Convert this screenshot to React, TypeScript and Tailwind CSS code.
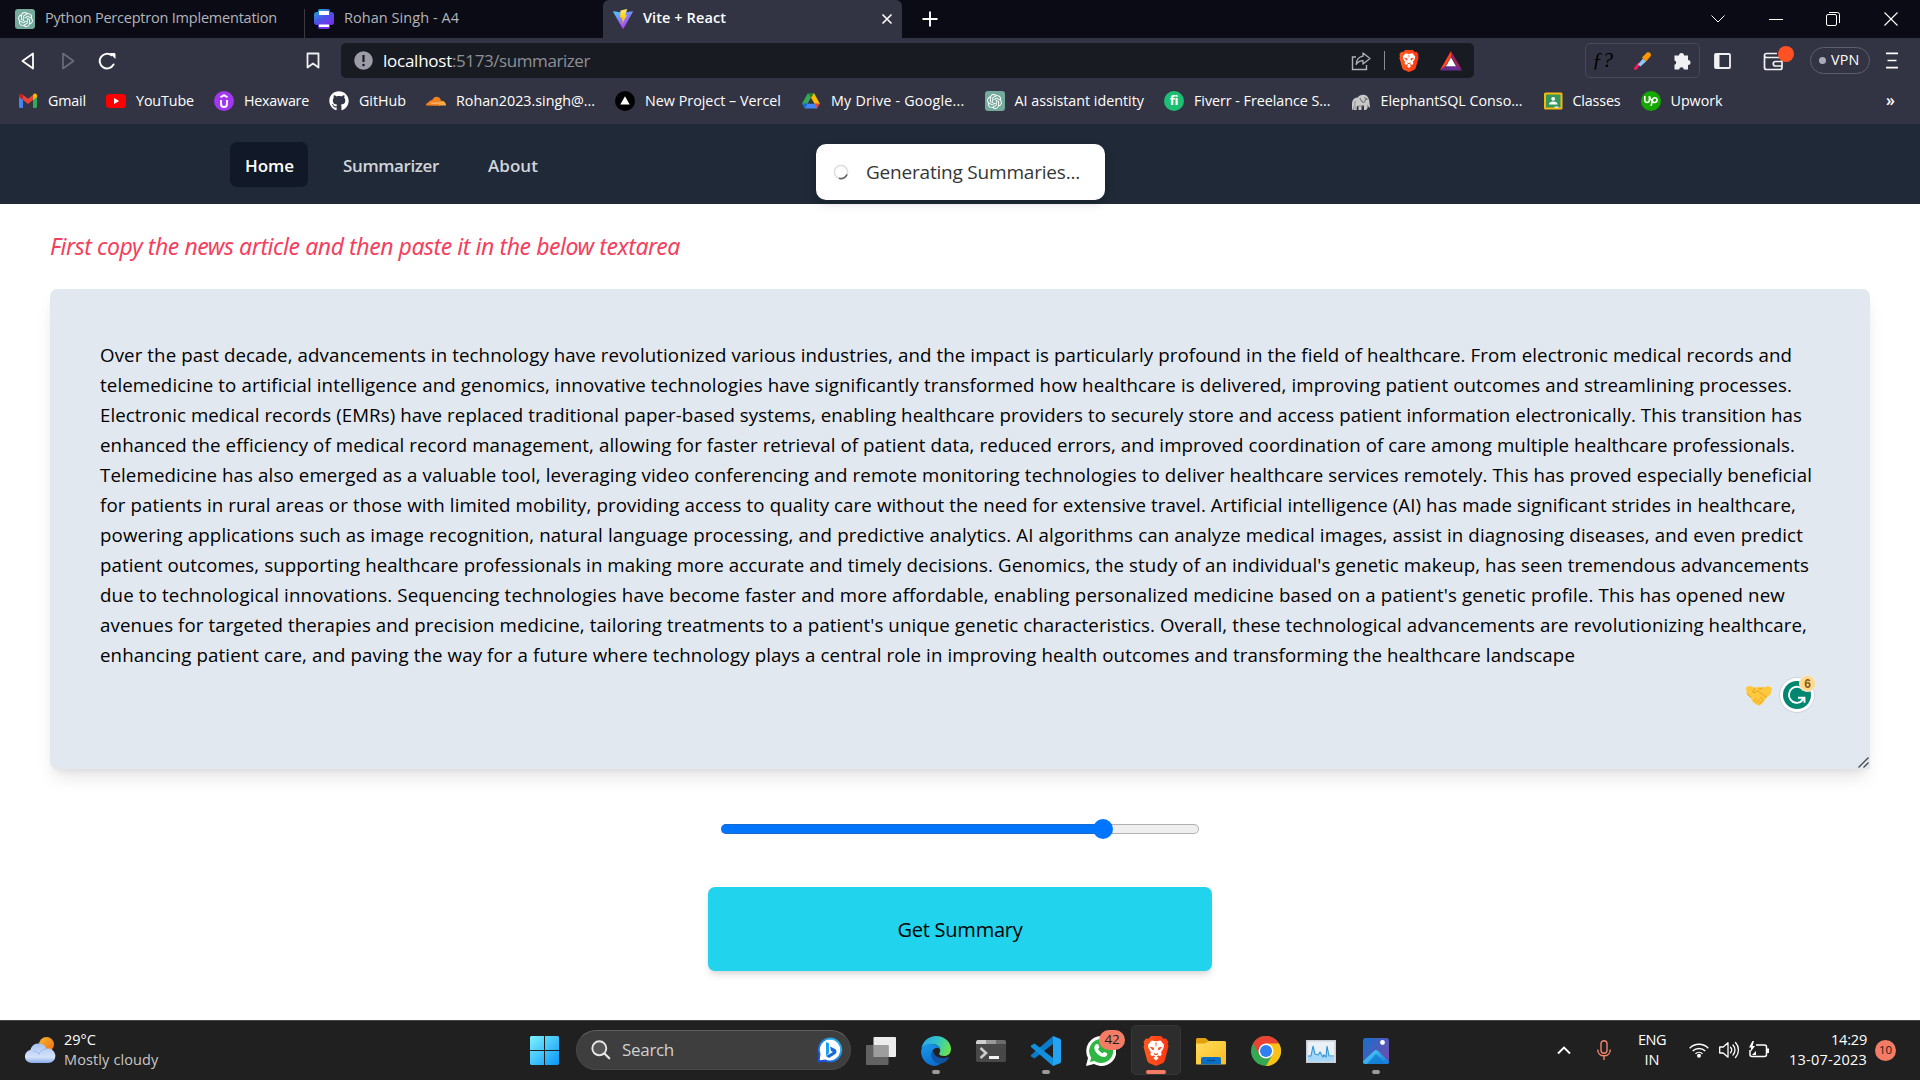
import { useLayoutEffect, useRef, type ReactNode } from "react";
import { SiOpenai, SiUpwork } from "react-icons/si";
import { FaGithub } from "react-icons/fa";

/* Text that is tracked so that it spans exactly `w` pixels. */
function Fit({ w, children, className = "" }: { w: number; children: string; className?: string }) {
  const ref = useRef<HTMLSpanElement>(null);
  useLayoutEffect(() => {
    const el = ref.current;
    if (!el) return;
    el.style.letterSpacing = "0px";
    const natural = el.getBoundingClientRect().width;
    el.style.letterSpacing = `${(w - natural) / children.length}px`;
  }, [w, children]);
  return (
    <span ref={ref} className={`inline-block whitespace-pre ${className}`}>
      {children}
    </span>
  );
}

function GptIcon() {
  return (
    <span className="flex h-5 w-5 items-center justify-center rounded-[3px] bg-[#74aa9c] text-white">
      <SiOpenai size={15} />
    </span>
  );
}

function ViteIcon() {
  return (
    <svg width="20" height="20" viewBox="0 0 20 20">
      <defs>
        <linearGradient id="v1" x1="0" y1="0" x2="0.6" y2="1">
          <stop offset="0" stopColor="#41d1ff" />
          <stop offset="1" stopColor="#bd34fe" />
        </linearGradient>
        <linearGradient id="v2" x1="0" y1="0" x2="0" y2="1">
          <stop offset="0" stopColor="#ffea83" />
          <stop offset="0.3" stopColor="#ffdd35" />
          <stop offset="1" stopColor="#ffa800" />
        </linearGradient>
      </defs>
      <path d="M19.8 3 10.5 19.5a.5.5 0 0 1-.9 0L.2 3c-.2-.4.1-.8.6-.8l9.2 1.6 9.200-1.600c.5 0 .8.400.6.800Z" fill="url(#v1)" />
      <path d="m14.300.100-6.800 1.300-.5 7.300 2.100-.4-.6 3 1.300-.300-.9 4.300 5.200-9.300-2 .3Z" fill="url(#v2)" />
    </svg>
  );
}

function PrintIcon() {
  return (
    <svg width="20" height="20" viewBox="0 0 20 20">
      <defs>
        <linearGradient id="pr" x1="0" y1="0" x2="0.6" y2="1">
          <stop offset="0" stopColor="#16b8cd" />
          <stop offset="0.5" stopColor="#4a55e8" />
          <stop offset="1" stopColor="#7d2ae8" />
        </linearGradient>
      </defs>
      <path d="M6 0h8a2 2 0 0 1 2 2v1h1a3 3 0 0 1 3 3v7a3 3 0 0 1-3 3h-1v2a2 2 0 0 1-2 2H6a2 2 0 0 1-2-2v-2H3a3 3 0 0 1-3-3V6a3 3 0 0 1 3-3h1V2a2 2 0 0 1 2-2Z" fill="url(#pr)" />
      <path d="M5 2h10v4H5ZM5 15.500h10v2.500H5Z" fill="#fff" />
    </svg>
  );
}

function BraveIcon({ w, h }: { w: number; h: number }) {
  return (
    <svg width={w} height={h} viewBox="0 0 26 30" preserveAspectRatio="none">
      <defs>
        <linearGradient id="bv" x1="0" y1="0" x2="1" y2="0">
          <stop offset="0" stopColor="#ff5a1f" />
          <stop offset="1" stopColor="#ff3512" />
        </linearGradient>
      </defs>
      <path d="M8 0h10l2.500 2.800 2.500-.3 2.500 3.500-.8 2 .8 2.500-3.500 13.500c-.4 1.500-1.200 2.500-2.500 3.300L13 30l-6.500-2.700C5.200 26.500 4.400 25.500 4 24L.5 10.500l.8-2L.5 6 3 2.500l2.500.3Z" fill="url(#bv)" />
      <path d="m8.500 4.500 4.500.8 4.500-.8 3.500 4.300-.4 3.200-2.600 4.500.8 1.800-1.600 2-2-.8-1.400.8 1.900 2-2.700 2.200-2.700-2.200 1.900-2-1.400-.8-2 .8-1.600-2 .8-1.800L5.400 12 5 8.800Z" fill="#fff" />
      <path d="m6.500 10.700 4.200.7.300 1.800-.8 1.300Zm13 0-4.200.7-.3 1.800.8 1.300ZM10.700 16.700 13 18l2.300-1.300-.9 2.300H11.600ZM12.400 6.500h1.200l-.3 4h-.6Z" fill="#ff4a17" />
    </svg>
  );
}

function GmailIcon() {
  return (
    <svg width="20" height="20" viewBox="0 0 20 20">
      <path d="M1 4.500v11A1.500 1.500 0 0 0 2.500 17H5V8Z" fill="#4285f4" />
      <path d="M15 8v9h2.500a1.500 1.500 0 0 0 1.500-1.500v-11Z" fill="#34a853" />
      <path d="M15 4.200v4.900l4-3V4.800c0-1.900-2-2.800-3.400-1.700Z" fill="#fbbc04" />
      <path d="M5 9.100V4l5 3.800L15 4v5.100l-5 3.800Z" fill="#ea4335" />
      <path d="M1 4.800v1.300l4 3V4l-.6-.8C3 2 1 3 1 4.800Z" fill="#c5221f" />
    </svg>
  );
}

function YouTubeIcon() {
  return (
    <svg width="20" height="20" viewBox="0 0 20 20">
      <rect y="3" width="20" height="14" rx="3.500" fill="#f00" />
      <path d="m8 7 5.200 3L8 13Z" fill="#fff" />
    </svg>
  );
}

function HexIcon() {
  return (
    <svg width="20" height="20" viewBox="0 0 20 20">
      <circle cx="10" cy="10" r="10" fill="#a435f0" />
      <path d="M7 9v4a3 3 0 0 0 6 0V9M6.500 6.300 10 4.200l3.500 2.100" fill="none" stroke="#fff" strokeWidth="1.900" />
    </svg>
  );
}

function CloudflareIcon() {
  return (
    <svg width="20" height="20" viewBox="0 0 20 20">
      <path d="M0 14.500c0-2 1.300-3.200 3-3.300.2-1.500 1.800-2.300 3-1.600C7 6.800 9 5.500 11 5.700c2.200.2 3.700 1.700 4 4l-1 5Z" fill="#f6821f" />
      <path d="M13 14.500c.4-2.500 1.300-4.700 3-4.700 2.300.2 4 2.200 4 4.700Z" fill="#fbad41" />
      <path d="m5 12.300 9-.3" stroke="#ffe1b8" strokeWidth=".7" />
    </svg>
  );
}

function VercelIcon() {
  return (
    <svg width="20" height="20" viewBox="0 0 20 20">
      <circle cx="10" cy="10" r="10" fill="#000" />
      <path d="m10 5.300 4.700 8.200H5.300Z" fill="#fff" />
    </svg>
  );
}

function DriveIcon() {
  return (
    <svg width="20" height="20" viewBox="0 0 20 20">
      <path d="M7 2 1 12.500 4 17.500 10 7Z" fill="#34a853" />
      <path d="M13 2H9.500L7.800 3.500 13.500 13H19Z" fill="#fbbc04" />
      <path d="M7 2 10 7l3-5Z" fill="#188038" />
      <path d="M6.500 12.500H1l3 5 3-1Z" fill="#1967d2" />
      <path d="M13.500 12.500H19l-3 5-3-1Z" fill="#ea4335" />
      <path d="M6.700 12.500h6.900L16 17.500H4Z" fill="#4285f4" />
      <path d="M10 7 6.800 12.500h6.500Z" fill="#333443" />
    </svg>
  );
}

function FiverrIcon() {
  return (
    <span className="flex h-5 w-5 items-center justify-center rounded-full bg-[#1dbf73] pb-[2px] text-[13px] leading-none font-bold tracking-tight text-white">
      fi
    </span>
  );
}

function ElephantIcon() {
  return (
    <svg width="20" height="20" viewBox="0 0 20 20">
      <path d="M1 19v-6c0-4 2-6.500 6-6.500.5-1.500 2-2.500 4-2.500 3-.5 5 .5 6 2.500 1.200 1.800 1.500 4 1.600 6.500.2 1.500.6 3 .4 3.500-1.200.3-2-1-2.400-3.500V17l-1.600 2h-2v-4l-1-1-1.500 1v4h-3v-4H6l-.5 4h-3L2.300 15 2 18.500Z" fill="#c9c9c9" />
      <path d="M9 7c1 3 3 5 4.500 4 1-1.500.8-4 .3-5" fill="none" stroke="#777" strokeWidth="1.100" />
      <path d="M4 10v8M7 15h5" stroke="#8a8a8a" strokeWidth="1" />
      <circle cx="15.800" cy="8" r=".8" fill="#444" />
    </svg>
  );
}

function ClassesIcon() {
  return (
    <svg width="20" height="20" viewBox="0 0 20 20">
      <rect x="1" y="1.500" width="18.500" height="17" rx="1.500" fill="#f6b90b" />
      <rect x="3" y="3.500" width="14.500" height="13" fill="#35955a" />
      <circle cx="10.200" cy="7.800" r="1.900" fill="#fff" />
      <path d="M6 13.500c0-2.300 2-3 4.200-3s4.300.7 4.300 3Z" fill="#fff" />
      <path d="M11.500 15.500h4v1.500h-4Z" fill="#e6e6e6" />
    </svg>
  );
}

function UpworkIcon() {
  return (
    <span className="flex h-5 w-5 items-center justify-center rounded-full bg-[#14a800] text-white">
      <SiUpwork size={14} />
    </span>
  );
}

const bookmarks: { icon: ReactNode; label: string; w: number }[] = [
  { icon: <GmailIcon />, label: "Gmail", w: 38 },
  { icon: <YouTubeIcon />, label: "YouTube", w: 58 },
  { icon: <HexIcon />, label: "Hexaware", w: 65 },
  { icon: <FaGithub size={20} color="#fff" />, label: "GitHub", w: 47 },
  { icon: <CloudflareIcon />, label: "Rohan2023.singh@...", w: 139 },
  { icon: <VercelIcon />, label: "New Project – Vercel", w: 136 },
  { icon: <DriveIcon />, label: "My Drive - Google...", w: 133.500 },
  { icon: <GptIcon />, label: "AI assistant identity", w: 129.500 },
  { icon: <FiverrIcon />, label: "Fiverr - Freelance S...", w: 136.500 },
  { icon: <ElephantIcon />, label: "ElephantSQL Conso...", w: 142 },
  { icon: <ClassesIcon />, label: "Classes", w: 48 },
  { icon: <UpworkIcon />, label: "Upwork", w: 52 },
];

const article: [string, number][] = [
  ["Over the past decade, advancements in technology have revolutionized various industries, and the impact is particularly profound in the field of healthcare. From electronic medical records and", 1692],
  ["telemedicine to artificial intelligence and genomics, innovative technologies have significantly transformed how healthcare is delivered, improving patient outcomes and streamlining processes.", 1692],
  ["Electronic medical records (EMRs) have replaced traditional paper-based systems, enabling healthcare providers to securely store and access patient information electronically. This transition has", 1702],
  ["enhanced the efficiency of medical record management, allowing for faster retrieval of patient data, reduced errors, and improved coordination of care among multiple healthcare professionals.", 1695],
  ["Telemedicine has also emerged as a valuable tool, leveraging video conferencing and remote monitoring technologies to deliver healthcare services remotely. This has proved especially beneficial", 1712],
  ["for patients in rural areas or those with limited mobility, providing access to quality care without the need for extensive travel. Artificial intelligence (AI) has made significant strides in healthcare,", 1696],
  ["powering applications such as image recognition, natural language processing, and predictive analytics. AI algorithms can analyze medical images, assist in diagnosing diseases, and even predict", 1703],
  ["patient outcomes, supporting healthcare professionals in making more accurate and timely decisions. Genomics, the study of an individual's genetic makeup, has seen tremendous advancements", 1709],
  ["due to technological innovations. Sequencing technologies have become faster and more affordable, enabling personalized medicine based on a patient's genetic profile. This has opened new", 1685],
  ["avenues for targeted therapies and precision medicine, tailoring treatments to a patient's unique genetic characteristics. Overall, these technological advancements are revolutionizing healthcare,", 1707],
  ["enhancing patient care, and paving the way for a future where technology plays a central role in improving health outcomes and transforming the healthcare landscape", 1475],
];

function TabStrip() {
  return (
    <div className="flex h-[38px] bg-[#0b0b15] text-[14.500px] text-[#b3b4b9]">
      <div className="flex w-[304px] items-center gap-[10px] pl-[15px]">
        <GptIcon />
        <Fit w={232} className="pb-[2px]">Python Perceptron Implementation</Fit>
      </div>
      <div className="mt-[9px] w-px bg-[#3a3a40]" />
      <div className="flex w-[298px] items-center gap-[10px] pl-[9px]">
        <PrintIcon />
        <Fit w={115} className="pb-[2px]">Rohan Singh - A4</Fit>
      </div>
      <div className="flex w-[299px] items-center gap-[10px] rounded-t-[6px] bg-[#333443] pl-[10px] text-white">
        <ViteIcon />
        <Fit w={83} className="pb-[2px] font-semibold">Vite + React</Fit>
        <svg className="ml-auto mr-[9px]" width="12" height="12" viewBox="0 0 12 12">
          <path d="m1.500 1.500 9 9m0-9-9 9" stroke="#fff" strokeWidth="1.600" />
        </svg>
      </div>
      <div className="flex flex-1 items-center pl-[20px]">
        <svg width="16" height="16" viewBox="0 0 16 16">
          <path d="M8 0.500v15M.5 8h15" stroke="#fff" strokeWidth="1.900" />
        </svg>
        <div className="mr-[22px] ml-auto flex items-center">
          <svg width="14" height="8" viewBox="0 0 14 8" className="mr-[44px]">
            <path d="m.5.500 6.500 6.500L13.500.500" fill="none" stroke="#fff" strokeWidth="1" />
          </svg>
          <div className="mr-[43px] h-px w-[14px] bg-white" />
          <svg width="14" height="14" viewBox="0 0 14 14" className="mr-[44px]">
            <rect x=".5" y="2.500" width="10" height="11" rx="1.500" fill="none" stroke="#fff" />
            <path d="M3 .5h8.500a2 2 0 0 1 2 2V11" fill="none" stroke="#fff" />
          </svg>
          <svg width="14" height="14" viewBox="0 0 14 14">
            <path d="m.5.500 13 13m0-13-13 13" stroke="#fff" strokeWidth="1.100" />
          </svg>
        </div>
      </div>
    </div>
  );
}

function Toolbar() {
  return (
    <div className="flex h-[45px] items-center">
      <svg width="14" height="18" viewBox="0 0 14 18" className="ml-[21px]">
        <path d="M12 1.500v15L1.500 9Z" fill="none" stroke="#fff" strokeWidth="1.800" strokeLinejoin="round" />
      </svg>
      <svg width="14" height="18" viewBox="0 0 14 18" className="ml-[26px]">
        <path d="M2 1.500v15L12.500 9Z" fill="none" stroke="#6b6c79" strokeWidth="1.700" strokeLinejoin="round" />
      </svg>
      <svg width="19" height="18" viewBox="0 0 19 18" className="ml-[23px]">
        <path d="M15.500 12.500A7.300 7.300 0 1 1 13.500 3.300" fill="none" stroke="#fff" strokeWidth="2" strokeLinecap="round" />
        <path d="M11.500 1h4.300c1.300 0 1.700.7 1.700 1.700V7Z" fill="#fff" />
      </svg>
      <svg width="14" height="17" viewBox="0 0 14 17" className="ml-[189px]">
        <path d="M1.500 1.500h11v14L7 11.500l-5.500 4Z" fill="none" stroke="#f0f0f0" strokeWidth="1.800" strokeLinejoin="round" />
      </svg>
      <div className="ml-[21px] flex h-[35px] w-[1133px] items-center rounded-[5px] bg-[#181b22]">
        <svg width="19" height="19" viewBox="0 0 19 19" className="ml-[13px]">
          <circle cx="9.500" cy="9.500" r="9.300" fill="#9b9ca6" />
          <path d="M9.500 4v7" stroke="#181b22" strokeWidth="2.200" />
          <circle cx="9.500" cy="14" r="1.300" fill="#181b22" />
        </svg>
        <span className="ml-[10px] text-[17px] text-white">
          <Fit w={69}>localhost</Fit>
          <Fit w={138} className="text-[#8e9097]">:5173/summarizer</Fit>
        </span>
        <svg width="20" height="20" viewBox="0 0 20 20" className="ml-auto">
          <path d="M5 6H1.500v12.500h14V14" fill="none" stroke="#b0b1b6" strokeWidth="1.400" />
          <path d="m12 2 7 5.500-7 5.500v-3.300c-3 0-5 1-6.800 3.800.3-4.700 2.800-7.800 6.800-8.300Z" fill="none" stroke="#b0b1b6" strokeWidth="1.300" strokeLinejoin="round" />
        </svg>
        <div className="ml-[13px] h-[19px] w-px bg-[#8a8b90]" />
        <div className="ml-[14px]"><BraveIcon w={20} h={22} /></div>
        <svg width="22" height="20" viewBox="0 0 22 20" className="mr-[12px] ml-[21px]">
          <path d="M11 0v6L5.500 15.500 0 19Z" fill="#ff4724" />
          <path d="M11 0v6l5.500 9.500L22 19Z" fill="#9e1f63" />
          <path d="M0 19.500 5.500 15h11l5.500 4.500Z" fill="#662d91" />
          <path d="m11 6.500 5 8.700H6Z" fill="#fff" />
        </svg>
      </div>
      <div className="ml-[111px] flex h-[35px] w-[115px] items-center rounded-[5px] border border-[#494a59]">
        <span className="ml-[6px] w-[22px] font-['Liberation_Serif'] text-[21px] leading-none text-black italic">ƒ?</span>
        <svg width="18" height="18" viewBox="0 0 18 18" className="ml-[20px]">
          <path d="M1.500 16.500 5 12" stroke="#e91e63" strokeWidth="3" strokeLinecap="round" />
          <path d="m4 12.500 5-6 3 3-5.500 5Z" fill="#90caf9" />
          <path d="m8 5.500 5-5c2.500-1 4.500 1 3.800 3.500L12 9.500Z" fill="#ff9800" />
        </svg>
        <svg width="18" height="18" viewBox="0 0 18 18" className="ml-[21px]">
          <path d="M6 3.500a2.500 2.500 0 0 1 5 0h4V8a2.500 2.500 0 0 1 0 5v4.500h-4.200a2.300 2.300 0 0 0-4.600 0H1.500v-4.800a2.200 2.200 0 0 0 0-4.300V3.500Z" fill="#f1f1f3" />
        </svg>
      </div>
      <svg width="17" height="16" viewBox="0 0 17 16" className="ml-[14px]">
        <rect x="1" y="1" width="15" height="14" rx="1" fill="none" stroke="#f1f1f3" strokeWidth="1.800" />
        <path d="M1 1h4.500v14H1Z" fill="#f1f1f3" />
      </svg>
      <div className="relative ml-[32px] h-[20px] w-[20px]">
        <svg width="20" height="20" viewBox="0 0 20 20">
          <path d="M14 2.500H3.500a2 2 0 0 0 0 4H19M1.500 4.500v12a2 2 0 0 0 2 2h13.500a2 2 0 0 0 2-2v-10M19 10.500h-6.500a2 2 0 0 0 0 4.500H19" fill="none" stroke="#f1f1f3" strokeWidth="1.700" />
        </svg>
        <div className="absolute -top-[5px] left-[15px] h-[16px] w-[16px] rounded-full bg-[#ff5124]" />
      </div>
      <div className="ml-[27px] flex h-[27px] w-[60px] items-center rounded-full border border-[#5c5e70] pl-[8px] text-[14.300px] text-white">
        <span className="mr-[5px] h-[7px] w-[7px] rounded-full bg-[#a9abbd]" />
        <Fit w={28.500} className="pb-[2px]">VPN</Fit>
      </div>
      <svg width="12" height="17" viewBox="0 0 12 17" className="ml-[16px]">
        <path d="M0 1.300h12M1.500 8.500h9M0 15.700h12" stroke="#fff" strokeWidth="1.700" />
      </svg>
    </div>
  );
}

function Grammarly() {
  return (
    <div className="relative h-[36px] w-[36px]">
      <svg width="36" height="36" viewBox="0 0 36 36">
        <circle cx="18" cy="18" r="17.500" fill="#fff" stroke="#cdd0df" strokeWidth="1" />
        <circle cx="18" cy="18" r="14" fill="#02866f" />
        <path d="M24.500 13.200A8 8 0 1 0 22.800 24.200M19 20.700h6.500v5M25 21l-3.500 4" fill="none" stroke="#fff" strokeWidth="1.900" />
      </svg>
      <span className="absolute -top-[2px] left-[20px] flex h-[17px] w-[17px] items-center justify-center rounded-full border border-[#f5ecdc] bg-[#ffd98f] font-['Liberation_Sans'] text-[12px] font-bold text-[#8a5a12]">
        6
      </span>
    </div>
  );
}

function Handshake() {
  return (
    <svg width="26" height="21" viewBox="0 0 26 21">
      <path d="M1 1.500 5 1l4 1.800 4-1 4 1L22 1l4 2-1.500 6.500L20 13l-3 5-4 2.700-6-3.200-2-4.500L1 9 0 3Z" fill="#ffc83d" />
      <path d="m9 3-2.500 4c1.500 1.500 3.500 0 5-1.300l7 5 1.500 2M8 16l2-2.500M10.500 18l2.500-3M13.500 19l2-2.500M17.500 15l-3-2.500M1 9l4 3.500M13 4l4-1.200" fill="none" stroke="#e59a20" strokeWidth=".9" strokeLinecap="round" />
    </svg>
  );
}

function Page() {
  return (
    <main className="flex h-[896px] flex-col bg-white text-black">
      <nav className="flex h-[80px] shrink-0 items-center bg-[#1f2937] pt-px pl-[230px] text-[17px] font-semibold text-[#d1d5db]">
        <div className="flex h-[45px] w-[78px] items-center rounded-[7px] bg-[#111827] pt-[2px] pl-[15px] text-white">
          <Fit w={49}>Home</Fit>
        </div>
        <Fit w={96} className="ml-[35px] pt-[2px]">Summarizer</Fit>
        <Fit w={50} className="ml-[49px] pt-[2px]">About</Fit>
        <div className="relative z-10 mt-[14px] ml-[278px] flex h-[56px] w-[289px] items-center rounded-[10px] bg-white text-[19px] font-normal text-[#363636] shadow-[0_4px_12px_rgba(0,0,0,0.1),0_4px_4px_rgba(0,0,0,0.05)]">
          <svg width="16" height="16" viewBox="0 0 16 16" className="ml-[17px]">
            <circle cx="8" cy="8" r="6.600" fill="none" stroke="#e0e0e0" strokeWidth="1.700" />
            <path d="M14 10.500A6.600 6.600 0 0 1 6 14.300" fill="none" stroke="#616161" strokeWidth="1.700" />
          </svg>
          <Fit w={214} className="ml-[17px] pt-[2px]">Generating Summaries...</Fit>
        </div>
      </nav>
      <p className="mt-[24px] ml-[50px] h-[36px] font-['Noto_Sans'] text-[23px] leading-[36px] text-[#f43f5e] italic">
        <Fit w={630}>First copy the news article and then paste it in the below textarea</Fit>
      </p>
      <section className="mx-[50px] mt-[25px] flex h-[480px] shrink-0 flex-col rounded-[7px] rounded-br-none bg-[#e2e8f0] pt-[51px] pl-[50px] shadow-[0_12px_18px_-4px_rgba(0,0,0,0.1),0_5px_8px_-5px_rgba(0,0,0,0.1)]">
        {article.map(([line, w]) => (
          <div key={line} className="h-[30px] text-[18.700px] leading-[30px]">
            <Fit w={w}>{line}</Fit>
          </div>
        ))}
        <div className="mt-[7px] mr-[55px] flex items-center justify-end gap-[7px]">
          <Handshake />
          <Grammarly />
        </div>
        <svg width="11" height="11" viewBox="0 0 11 11" className="mt-auto mr-px mb-px self-end">
          <path d="m.5 10.500 10-10M5.500 10.500l5-5" stroke="#444" strokeWidth="1.300" />
        </svg>
      </section>
      <div className="mx-auto mt-[50px] flex h-[20px] w-[478px] items-center">
        <div className="h-[10px] w-[374px] rounded-l-full border-y border-[#1c68cc] bg-[#0075ff]" />
        <div className="-ml-[1px] -mr-[10px] h-[20px] w-[20px] -translate-x-[1px] rounded-full bg-[#0075ff]" />
        <div className="h-[10px] flex-1 rounded-r-full border border-l-0 border-[#b2b2b2] bg-[#efefef]" />
      </div>
      <button className="mx-auto mt-[48px] flex h-[84px] w-[504px] shrink-0 items-center justify-center rounded-[7px] bg-[#22d3ee] pt-[2px] text-[20px] shadow-[0_5px_7px_-1px_rgba(0,0,0,0.12),0_2px_4px_-2px_rgba(0,0,0,0.1)]">
        <Fit w={125}>Get Summary</Fit>
      </button>
    </main>
  );
}

function WindowsLogo() {
  return (
    <svg width="29" height="29" viewBox="0 0 29 29">
      <defs>
        <linearGradient id="wn" x1="0" y1="0" x2="29" y2="29" gradientUnits="userSpaceOnUse">
          <stop offset="0" stopColor="#7df3ff" />
          <stop offset="1" stopColor="#0a95f8" />
        </linearGradient>
      </defs>
      <path d="M1 0h13v14H0V1ZM15 0h13l1 1v13H15ZM0 15h14v14H1l-1-1ZM15 15h14v13l-1 1H15Z" fill="url(#wn)" />
    </svg>
  );
}

function EdgeIcon() {
  return (
    <svg width="30" height="30" viewBox="0 0 30 30">
      <defs>
        <linearGradient id="e1" x1="0" y1="0.300" x2="1" y2="0.600">
          <stop offset="0" stopColor="#2aa5e8" />
          <stop offset="0.500" stopColor="#33c6c4" />
          <stop offset="1" stopColor="#6ee34c" />
        </linearGradient>
        <linearGradient id="e2" x1="0" y1="0" x2="0.500" y2="1">
          <stop offset="0" stopColor="#1c9be8" />
          <stop offset="1" stopColor="#0a6fd0" />
        </linearGradient>
      </defs>
      <path d="M.5 12.500C1.500 5 8 0 15 0c9 0 15 6.500 15 13 0 4.500-3.200 7-6.800 7-3 0-5-1-5-2.300 0-1 1-1.200 1-3.700 0-3-3-6-7.700-6C6 8 2 10.500.5 12.500Z" fill="url(#e1)" />
      <path d="M.1 15C.5 10 5.500 7.500 10.500 7.700c5 .2 8.700 3.200 8.700 6.300-1-2-3.500-3-5.500-1.500-3 2-3.500 6-1.500 9.500 2.300 4.300 6 5 8.500 4.700-2 2-5 3.200-8 3.200C5.500 29 0 23 .1 15Z" fill="url(#e2)" />
      <path d="M12 14c-3 3.500-1.800 8 1 11 2 2 4 2.700 6.500 2.500 4-.5 7-3 8.400-6 .2-.5-.3-.8-.8-.5-5 2.500-12 1-14.300-4-.5-1.200-.7-2-.8-3Z" fill="#1254a4" />
    </svg>
  );
}

function BingIcon() {
  return (
    <svg width="26" height="26" viewBox="0 0 26 26">
      <defs>
        <linearGradient id="bg" x1="1" y1="0" x2="0" y2="1">
          <stop offset="0" stopColor="#24c0ee" />
          <stop offset="1" stopColor="#1b48d8" />
        </linearGradient>
      </defs>
      <path d="M13 1.500A11.500 11.500 0 1 1 8 23.500L1.500 24.500 2.500 17A11.500 11.500 0 0 1 13 1.500Z" fill="#fff" stroke="url(#bg)" strokeWidth="2" />
      <path d="m9 5 3 1.200v10l-3 2.800Z" fill="#1d9ff0" />
      <path d="m13 9.500 5 2.500c2.200 1.500 1.700 4 0 5.300L12 21l-3-2 7-4-2-1Z" fill="#1668df" />
    </svg>
  );
}

function VSCodeIcon() {
  return (
    <svg width="30" height="30" viewBox="0 0 30 30">
      <path d="M22 0v8L3.500 22.500 0 20.500v-1.500Z" fill="#0a7bc8" />
      <path d="M22 30v-8L3.500 7.500 0 9.500V11Z" fill="#1290de" />
      <path d="m22 0 7 2.800q1 .5 1 1.500v21.400q0 1-1 1.500L22 30Z" fill="#24a3f0" />
    </svg>
  );
}

function WhatsAppIcon() {
  return (
    <div className="relative h-[30px] w-[30px]">
      <svg width="30" height="30" viewBox="0 0 30 30">
        <path d="M15 0A15 15 0 1 1 8 28L0 30l2-8A15 15 0 0 1 15 0Z" fill="#fff" />
        <path d="M15 3a12 12 0 1 1-6.500 22L4 26l1.200-4.300A12 12 0 0 1 15 3Z" fill="#2db742" />
        <path d="M10.500 8c1-.3 1.700 0 2 1l.8 2c.2.700-1 1.500-1.200 2 1 2 2.500 3.500 4.500 4.300.7-.2 1.200-1.600 2-1.300l2.400 1.200c.7.500 0 2.800-1.700 3.500C15 22.500 8 16 8.300 11.500c0-1.500 1-3 2.200-3.500Z" fill="#fff" />
      </svg>
      <span className="absolute -top-[6px] left-[13px] flex h-[20px] w-[26px] items-center justify-center rounded-full bg-[#f47c64] pb-[2px] text-[13.500px] text-[#1c1c1c]">
        <Fit w={15}>42</Fit>
      </span>
    </div>
  );
}

function TerminalIcon() {
  return (
    <svg width="30" height="22" viewBox="0 0 30 22">
      <rect width="30" height="22" rx="1.500" fill="#484848" />
      <path d="M1.500 0H10v4H0V1.500Z" fill="#cfcfcf" />
      <path d="M10 0h10v4H10Z" fill="#999" />
      <path d="M20 0h8.500L30 1.500V4H20Z" fill="#6c6c6c" />
      <path d="m4.500 8 5.500 5-5.500 5" fill="none" stroke="#ccc" strokeWidth="2.600" />
      <path d="M13 16h10v3H13Z" fill="#f2f2f2" />
    </svg>
  );
}

function FolderIcon() {
  return (
    <svg width="30" height="27" viewBox="0 0 30 27">
      <defs>
        <linearGradient id="fo" x1="0" y1="0" x2="1" y2="1">
          <stop offset="0" stopColor="#ffdc5e" />
          <stop offset="1" stopColor="#fbbd1f" />
        </linearGradient>
      </defs>
      <path d="M0 1.500A1.500 1.500 0 0 1 1.500 0h8L13 3l-3 4H0Z" fill="#e2a10b" />
      <path d="M0 5.500h9L13 3h15.500A1.500 1.500 0 0 1 30 4.500v21a1 1 0 0 1-1 1H1a1 1 0 0 1-1-1Z" fill="url(#fo)" />
      <path d="M5 26.500V21a2 2 0 0 1 2-2h16a2 2 0 0 1 2 2v5.500Z" fill="#0a6fc4" />
      <path d="M11 22.500h8" stroke="#054a87" strokeWidth="1.300" />
    </svg>
  );
}

function ChromeIcon() {
  return (
    <svg width="30" height="30" viewBox="0 0 30 30">
      <circle cx="15" cy="15" r="15" fill="#34a853" />
      <path d="M15 15 2 7.500a15 15 0 0 1 26 0Z" fill="#ea4335" />
      <path d="M15 7.500h13A15 15 0 0 1 15 30l6.500-11.500Z" fill="#fbc116" />
      <path d="M2 7.500h13v7.500l-6.500 3.750Z" fill="#ea4335" />
      <circle cx="15" cy="15" r="7.500" fill="#fff" />
      <circle cx="15" cy="15" r="6" fill="#2f7fee" />
    </svg>
  );
}

function MonitorIcon() {
  return (
    <svg width="30" height="23" viewBox="0 0 30 23">
      <rect x=".75" y=".75" width="28.500" height="21.500" fill="#eaf1f6" stroke="#c8cdd2" strokeWidth="1.500" />
      <path d="M2 16h3l2-9 2 8 3 1 2-3 3 5 1-2 2 2 1-10 2 9h5v4.500H2Z" fill="#a5d8f8" />
      <path d="M2 16h3l2-10 2 8 3 1 2-3 3 5 1-2 2 2 1-11 2 10h5" fill="none" stroke="#2f94d8" strokeWidth="1.100" />
    </svg>
  );
}

function PhotosIcon() {
  return (
    <svg width="26" height="26" viewBox="0 0 26 26">
      <defs>
        <linearGradient id="ph" x1="0" y1="0" x2="1" y2="0.600">
          <stop offset="0" stopColor="#1670cc" />
          <stop offset="1" stopColor="#6a4fb0" />
        </linearGradient>
        <linearGradient id="pm" x1="0" y1="0" x2="1" y2="0.700">
          <stop offset="0" stopColor="#57dcff" />
          <stop offset="1" stopColor="#1583dd" />
        </linearGradient>
      </defs>
      <rect width="26" height="26" rx="2.500" fill="url(#ph)" />
      <path d="M0 23.500 11 13a3 3 0 0 1 4 0l11 10.500q0 2.500-2.500 2.500h-21Q0 26 0 23.500Z" fill="url(#pm)" />
      <path d="m13 16 10 10H4Z" fill="#1277cf" opacity=".75" />
      <circle cx="19.500" cy="4.500" r="2.400" fill="#fff" />
    </svg>
  );
}

function TaskItem({ children, running, active }: { children: ReactNode; running?: boolean; active?: boolean }) {
  return (
    <div className={active ? "flex h-[50px] w-[50px] flex-col items-center justify-end rounded-[5px] border border-[#363636] bg-[#2d2d2d]" : "flex h-[50px] w-[50px] flex-col items-center justify-end border border-transparent"}>
      <div className="flex h-[30px] items-center justify-center">{children}</div>
      <div className={active ? "mt-[4px] h-[4px] w-[20px] rounded-full bg-[#f47c64]" : running ? "mt-[4px] h-[4px] w-[8px] rounded-full bg-[#9a9a9a]" : "mt-[4px] h-[4px] w-[8px]"} />
    </div>
  );
}

function Taskbar() {
  return (
    <footer className="flex h-[60px] items-center border-t border-[#454747] bg-[#202020] pb-px text-[14.500px] leading-[20px] text-white">
      <svg width="31" height="27" viewBox="0 0 31 27" className="ml-[25px]">
        <defs>
          <linearGradient id="sn" x1="0" y1="0" x2="1" y2="1">
            <stop offset="0" stopColor="#f8b732" />
            <stop offset="1" stopColor="#ef6c10" />
          </linearGradient>
          <linearGradient id="cl" x1="0" y1="0" x2="0" y2="1">
            <stop offset="0" stopColor="#a6c2f1" />
            <stop offset="0.700" stopColor="#d4e2fa" />
            <stop offset="1" stopColor="#88a9e8" />
          </linearGradient>
        </defs>
        <circle cx="21.500" cy="7.500" r="7.500" fill="url(#sn)" />
        <path d="M6.500 26a6.500 6.500 0 0 1-1.200-12.900 8.500 8.500 0 0 1 16.200-1.300A7.200 7.200 0 1 1 23 26Z" fill="url(#cl)" />
        <path d="M8.500 14c3 0 5 2 5.500 3.500.8-3 3.500-5.500 7.500-5.700" fill="none" stroke="#8fb0ea" strokeWidth=".8" />
      </svg>
      <div className="ml-[8px] flex w-[100px] flex-col pb-px">
        <span><Fit w={32}>29°C</Fit></span>
        <span className="text-[#c8c8c8]"><Fit w={94.500}>Mostly cloudy</Fit></span>
      </div>
      <div className="ml-[366px]"><WindowsLogo /></div>
      <div className="ml-[17px] flex h-[40px] w-[275px] items-center rounded-full border border-[#484848] border-t-[#606060] bg-[#3e3e3e]">
        <svg width="20" height="20" viewBox="0 0 20 20" className="ml-[14px]">
          <circle cx="8.300" cy="8.300" r="7" fill="#555" stroke="#e6e6e6" strokeWidth="1.900" />
          <path d="m13.500 13.500 4.700 4.700" stroke="#e6e6e6" strokeWidth="2.300" strokeLinecap="round" />
        </svg>
        <Fit w={52} className="ml-[11px] text-[17px] text-[#d0d0d0]">Search</Fit>
        <div className="mr-[7px] ml-auto"><BingIcon /></div>
      </div>
      <div className="ml-[5px] flex gap-[5px]">
        <TaskItem>
          <svg width="30" height="28" viewBox="0 0 30 28">
            <rect x="7.500" width="22.500" height="20" rx="1" fill="#ececec" />
            <rect y="8" width="22.500" height="20" rx="1" fill="#6f6f6f" opacity=".85" />
            <path d="M7.500 8h15v12h-15Z" fill="#9d9d9d" />
          </svg>
        </TaskItem>
        <TaskItem running><EdgeIcon /></TaskItem>
        <TaskItem><TerminalIcon /></TaskItem>
        <TaskItem running><VSCodeIcon /></TaskItem>
        <TaskItem><WhatsAppIcon /></TaskItem>
        <TaskItem active><BraveIcon w={26} h={30} /></TaskItem>
        <TaskItem><FolderIcon /></TaskItem>
        <TaskItem><ChromeIcon /></TaskItem>
        <TaskItem><MonitorIcon /></TaskItem>
        <TaskItem running><PhotosIcon /></TaskItem>
      </div>
      <div className="ml-auto flex items-center">
        <svg width="14" height="9" viewBox="0 0 14 9" className="mr-[26px]">
          <path d="m1 7.500 6-6 6 6" fill="none" stroke="#fff" strokeWidth="1.900" />
        </svg>
        <svg width="14" height="20" viewBox="0 0 14 20" className="mr-[27px]">
          <rect x="4" y=".7" width="6" height="12.500" rx="3" fill="none" stroke="#f0876b" strokeWidth="1.400" />
          <path d="M.7 9.500c0 4 2.800 6.300 6.300 6.300s6.300-2.300 6.300-6.300M7 15.800V20" fill="none" stroke="#f0876b" strokeWidth="1.400" />
        </svg>
        <div className="flex w-[28px] flex-col items-center">
          <Fit w={28}>ENG</Fit>
          <Fit w={15}>IN</Fit>
        </div>
        <svg width="20" height="16" viewBox="0 0 20 16" className="ml-[23px]">
          <path d="M.7 6.200a13 13 0 0 1 18.600 0M3.700 9a9 9 0 0 1 12.600 0M6.500 11.800a5 5 0 0 1 7 0" fill="none" stroke="#fff" strokeWidth="1.400" />
          <circle cx="10" cy="13.700" r="2" fill="#fff" />
        </svg>
        <svg width="21" height="18" viewBox="0 0 21 18" className="ml-[10px]">
          <path d="M.7 6h3.500L9 1.800v14.400L4.200 12H.7Z" fill="none" stroke="#fff" strokeWidth="1.300" strokeLinejoin="round" />
          <path d="M11.500 6.300a4 4 0 0 1 0 5.400M14 4a7.300 7.300 0 0 1 0 10M16.500 1.500a11 11 0 0 1 0 15" fill="none" stroke="#fff" strokeWidth="1.300" strokeLinecap="round" />
        </svg>
        <svg width="20" height="18" viewBox="0 0 20 18" className="ml-[9px]">
          <path d="M7 4h8.500a2 2 0 0 1 2 2v7.500a2 2 0 0 1-2 2H3a2 2 0 0 1-2-2V9" fill="none" stroke="#fff" strokeWidth="1.500" />
          <path d="M18 7.500h2v4.500h-2ZM3.500 0 0 6.500h2.200L1.500 11 6 5H3.500L5 0ZM3 14l4-4v4Z" fill="#fff" />
        </svg>
        <div className="ml-[20px] flex w-[78px] flex-col items-end pb-px">
          <Fit w={36}>14:29</Fit>
          <Fit w={78}>13-07-2023</Fit>
        </div>
        <span className="mr-[24px] ml-[8px] flex h-[21px] w-[21px] items-center justify-center rounded-full bg-[#f47c64] text-[11.500px] text-[#221512]">
          10
        </span>
      </div>
    </footer>
  );
}

export default function App() {
  return (
    <div className="flex h-[1080px] w-[1920px] flex-col overflow-hidden bg-white font-['Open_Sans',sans-serif]">
      <header className="flex h-[124px] shrink-0 flex-col bg-[#333443]">
        <TabStrip />
        <Toolbar />
        <div className="flex h-[36px] items-center gap-[20px] pl-[18px] text-[14.300px] text-white">
          {bookmarks.map((b) => (
            <div key={b.label} className="flex items-center gap-[10px]">
              {b.icon}
              <Fit w={b.w} className="pb-px">{b.label}</Fit>
            </div>
          ))}
          <span className="mr-[25px] ml-auto pb-[3px] text-[16px] leading-none font-semibold">»</span>
        </div>
      </header>
      <Page />
      <Taskbar />
    </div>
  );
}
